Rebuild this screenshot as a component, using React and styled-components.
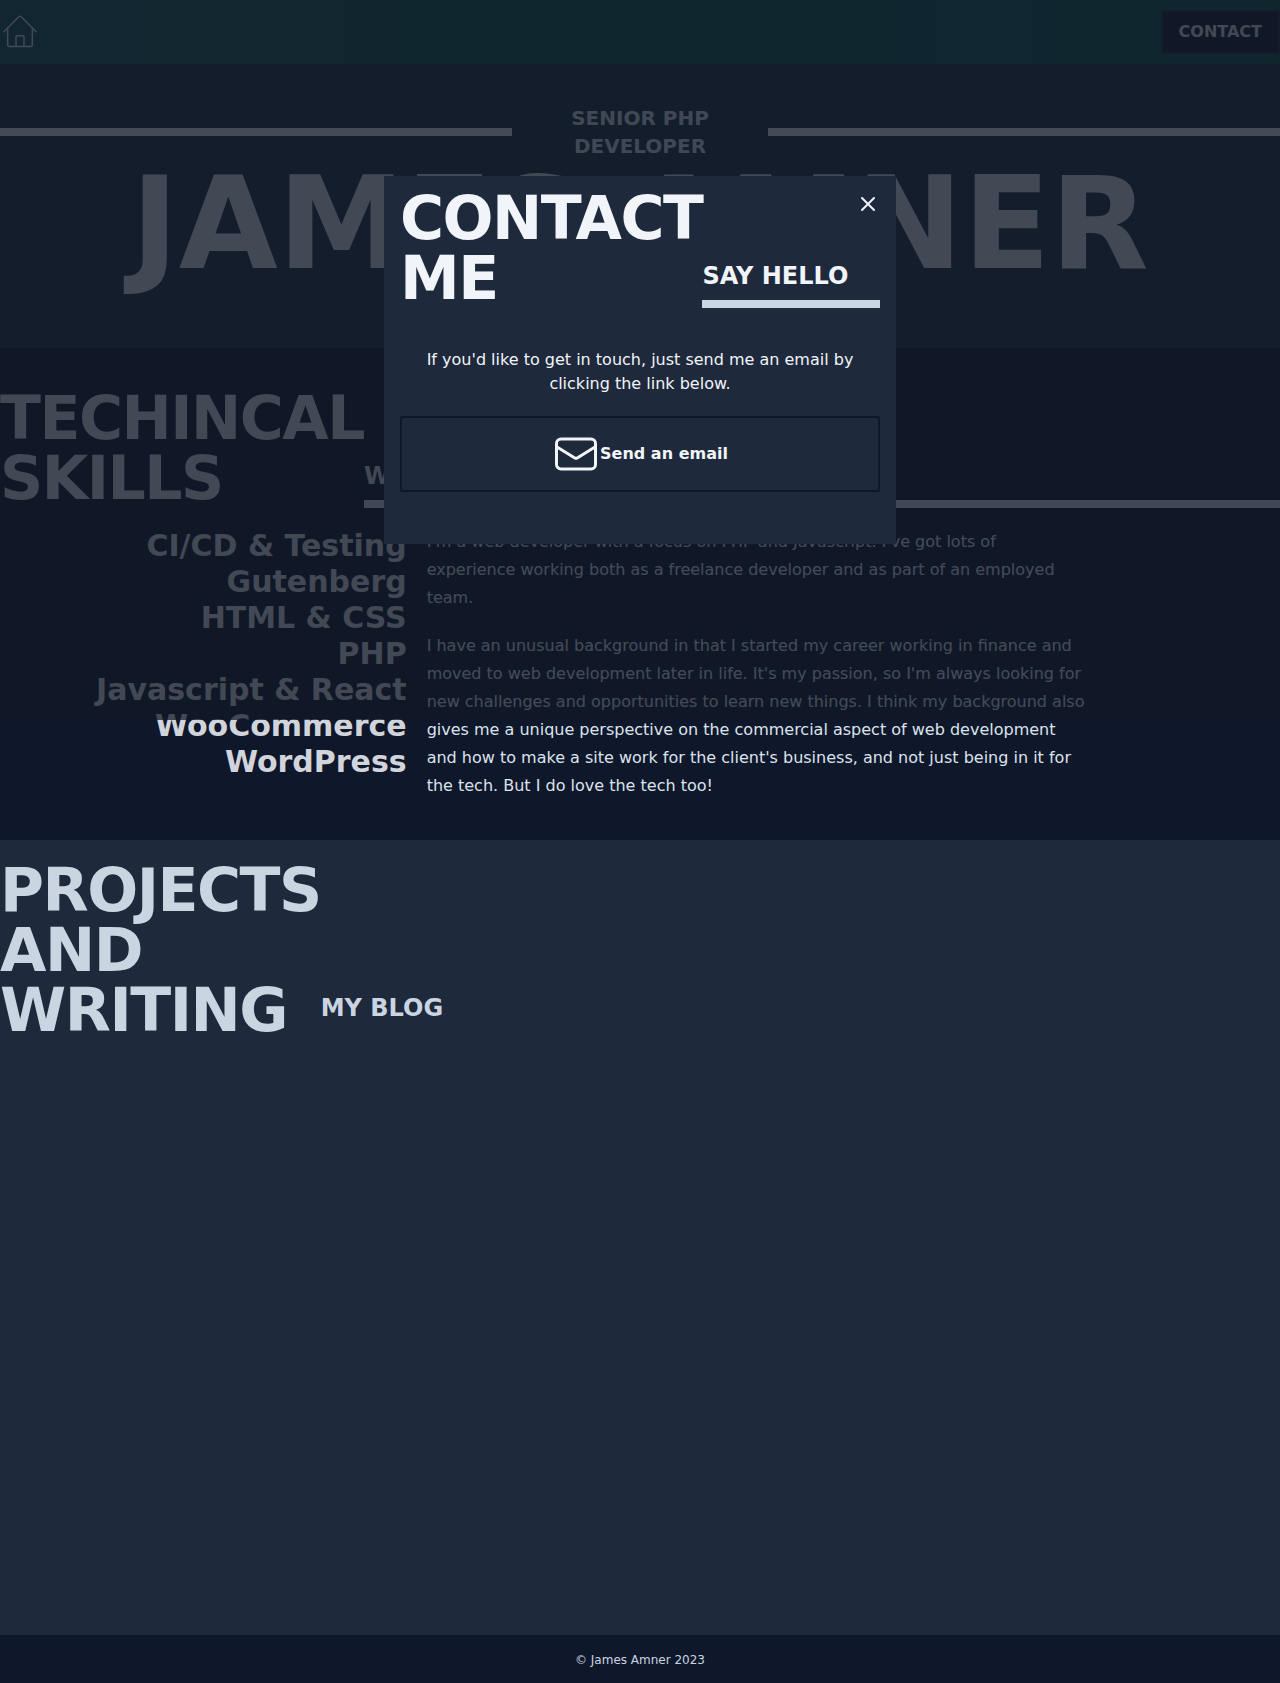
import React from 'react';
import styled, { createGlobalStyle } from 'styled-components';

const Global = createGlobalStyle`
  *, *::before, *::after { box-sizing: border-box; }
  body { margin: 0; background: #0f172a; color: #cbd5e1; font: 16px/24px "DejaVu Sans", sans-serif; }
  h1, h2, h3, p, ul { margin: 0; padding: 0; }
  ul { list-style: none; }
  a { color: inherit; text-decoration: none; }
  svg { display: block; }
`;

const Nav = styled.nav`
  display: flex;
  align-items: center;
  justify-content: space-between;
  height: 64px;
  background: linear-gradient(90deg, #144f54 0%, #12514a 12%, #0e5244 40%, #0e524c 78%, #0e5242 100%);
  color: #d1d5db;
`;
const HomeLink = styled.a`display: block;`;
const ContactButton = styled.button`
  height: 44px;
  padding: 0 16px;
  border: 2px solid #1b2540;
  border-radius: 2px;
  background: #0f172a;
  color: #d1d5db;
  font: bold 16px/24px "DejaVu Sans", sans-serif;
  text-transform: uppercase;
`;

const Hero = styled.header`
  padding: 40px 0 60px;
  background: #192c3d;
  color: #d1d5db;
`;
const RoleRow = styled.div`
  display: grid;
  grid-template-columns: 2fr 1fr 2fr;
  align-items: center;
`;
const Rule = styled.div`height: 8px; background: #d8e2e6;`;
const Role = styled.h2`
  padding: 0 40px;
  color: #c8d5dc;
  font-size: 20px;
  line-height: 28px;
  text-align: center;
  text-transform: uppercase;
`;
const Name = styled.h1`
  font-size: 128px;
  line-height: 1;
  text-align: center;
  text-transform: uppercase;
  white-space: nowrap;
`;

const Section = styled.section`
  padding: ${(p) => p.$pad};
  min-height: ${(p) => p.$min || 0};
  background: ${(p) => p.$bg};
`;
const Heading = styled.div`
  display: flex;
  align-items: flex-end;
  color: ${(p) => p.$color || '#cbd5e1'};
`;
const Title = styled.h2`
  width: min-content;
  font-size: 60px;
  line-height: 1;
  letter-spacing: -0.025em;
  text-transform: uppercase;
`;
const Subtitle = styled.h3`
  flex: 1;
  padding-bottom: 8px;
  border-bottom: 8px solid ${(p) => p.$line || '#cbd5e1'};
  font-size: 24px;
  line-height: 32px;
  text-transform: uppercase;
`;

const Columns = styled.div`
  display: grid;
  grid-template-columns: 1fr 2fr;
  margin-top: 20px;
`;
const Skills = styled.ul`
  padding-right: 20px;
  color: #d1d5db;
  font-size: 30px;
  font-weight: bold;
  line-height: 36px;
  text-align: right;
`;
const Prose = styled.div`
  display: grid;
  gap: 20px;
  max-width: 65ch;
  line-height: 28px;
  color: #dbe3ec;
`;

const Footer = styled.footer`
  display: grid;
  place-items: center;
  height: 48px;
  padding-top: 2px;
  background: #0f172a;
  font-size: 12px;
  line-height: 16px;
`;

const Backdrop = styled.div`
  position: absolute;
  top: 0;
  left: 0;
  width: 100%;
  height: 720px;
  display: flex;
  align-items: center;
  justify-content: center;
  background: rgba(17, 24, 39, 0.75);
`;
const Dialog = styled.div`
  position: relative;
  width: 512px;
  height: 368px;
  padding: 12px 16px;
  background: #1e293b;
  color: #f1f5f9;
`;
const Close = styled.button`
  position: absolute;
  top: 16px;
  right: 16px;
  padding: 0;
  border: 0;
  background: none;
  color: inherit;
`;
const Message = styled.p`
  margin: 40px 0 20px;
  text-align: center;
`;
const EmailLink = styled.a`
  display: flex;
  align-items: center;
  justify-content: center;
  padding: 12px;
  border: 2px solid #0f172a;
  border-radius: 2px;
  font-weight: bold;
`;

function Icon({ size, stroke, children }) {
  return (
    <svg width={size} height={size} viewBox="0 0 24 24" fill="none" stroke="currentColor"
      strokeWidth={stroke} strokeLinecap="round" strokeLinejoin="round">
      {children}
    </svg>
  );
}

const skills = ['CI/CD & Testing', 'Gutenberg', 'HTML & CSS', 'PHP', 'Javascript & React', 'WooCommerce', 'WordPress'];

export default function App() {
  return (
    <>
      <Global />
      <Nav>
        <HomeLink href="#" aria-label="Home">
          <Icon size={40} stroke={0.9}>
            <path d="M2.3 11.8 11.3 2.9a1 1 0 0 1 1.4 0l9 8.9M4.6 9.7v10.2c0 .5.3.8.8.8h13.2c.5 0 .8-.3.8-.8V9.7M9.6 20.7v-5.8c0-.4.3-.7.7-.7h3.4c.4 0 .7.3.7.7v5.8" />
          </Icon>
        </HomeLink>
        <ContactButton>Contact</ContactButton>
      </Nav>
      <Hero>
        <RoleRow>
          <Rule />
          <Role>Senior PHP Developer</Role>
          <Rule />
        </RoleRow>
        <Name>James Amner</Name>
      </Hero>
      <Section $bg="#0f172a" $pad="40px 0">
        <Heading $color="#d1d5db">
          <Title>Techincal Skills</Title>
          <Subtitle>What I do</Subtitle>
        </Heading>
        <Columns>
          <Skills>{skills.map((s) => <li key={s}>{s}</li>)}</Skills>
          <Prose>
            <p>I'm a web developer with a focus on PHP and Javascript. I've got lots of experience working both as a freelance developer and as part of an employed team.</p>
            <p>I have an unusual background in that I started my career working in finance and moved to web development later in life. It's my passion, so I'm always looking for new challenges and opportunities to learn new things. I think my background also gives me a unique perspective on the commercial aspect of web development and how to make a site work for the client's business, and not just being in it for the tech. But I do love the tech too!</p>
          </Prose>
        </Columns>
      </Section>
      <Section $bg="#1e293b" $pad="20px 0" $min="795px">
        <Heading>
          <Title>Projects and Writing</Title>
          <Subtitle $line="transparent">My Blog</Subtitle>
        </Heading>
      </Section>
      <Footer>© James Amner 2023</Footer>
      <Backdrop>
        <Dialog role="dialog">
          <Heading $color="#f1f5f9">
            <Title>Contact Me</Title>
            <Subtitle>Say hello</Subtitle>
          </Heading>
          <Close aria-label="Close">
            <Icon size={24} stroke={2}><path d="M6 18 18 6M6 6l12 12" /></Icon>
          </Close>
          <Message>If you'd like to get in touch, just send me an email by clicking the link below.</Message>
          <EmailLink href="#">
            <Icon size={48} stroke={1.5}>
              <rect x="2.25" y="4.5" width="19.5" height="15" rx="2.25" />
              <path d="m2.5 8.5 8.9 5.5a1.2 1.2 0 0 0 1.2 0l8.9-5.5" />
            </Icon>
            Send an email
          </EmailLink>
        </Dialog>
      </Backdrop>
    </>
  );
}
